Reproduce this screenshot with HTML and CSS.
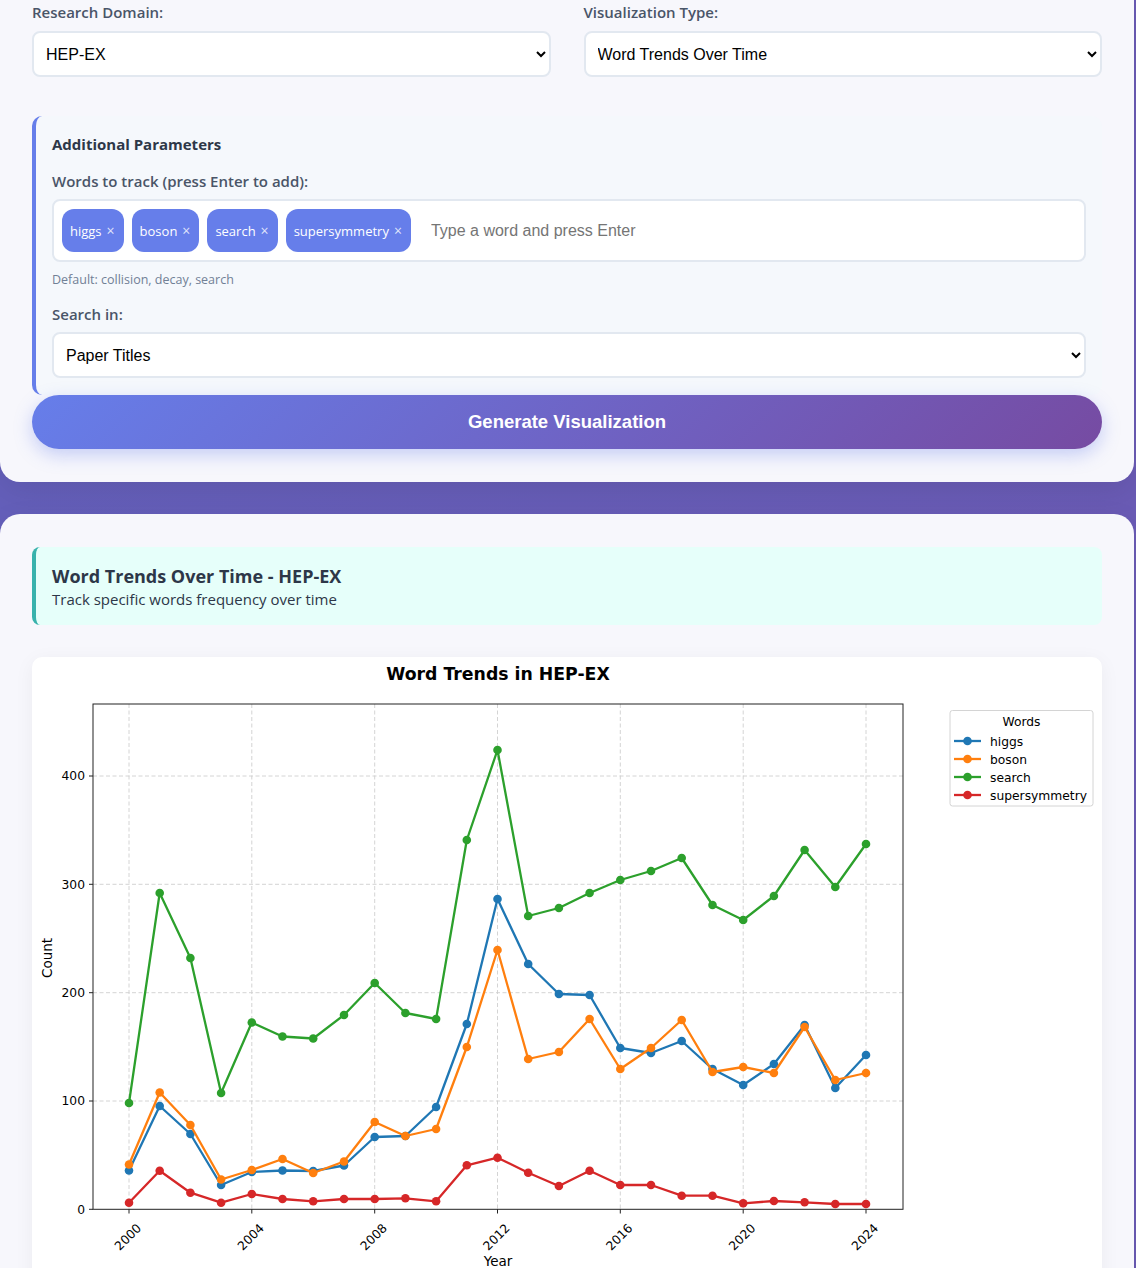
FILE: index.html
```html
<!DOCTYPE html>
<html lang="en">
<head>
<meta charset="utf-8">
<title>Research Visualization</title>
<link rel="stylesheet" href="styles.css">
</head>
<body>
<div class="page">
  <section class="card card-top">
    <div class="form-grid">
      <div class="form-group">
        <label class="label">Research Domain:</label>
        <select class="select"><option>HEP-EX</option></select>
      </div>
      <div class="form-group">
        <label class="label">Visualization Type:</label>
        <select class="select"><option>Word Trends Over Time</option></select>
      </div>
    </div>

    <div class="params">
      <h3 class="params-title">Additional Parameters</h3>
      <label class="label">Words to track (press Enter to add):</label>
      <div class="tag-box">
        <span class="tag">higgs<span class="tag-x">×</span></span>
        <span class="tag">boson<span class="tag-x">×</span></span>
        <span class="tag">search<span class="tag-x">×</span></span>
        <span class="tag">supersymmetry<span class="tag-x">×</span></span>
        <input class="tag-input" type="text" placeholder="Type a word and press Enter">
      </div>
      <div class="hint">Default: collision, decay, search</div>
      <label class="label label-search">Search in:</label>
      <select class="select"><option>Paper Titles</option></select>
    </div>

    <button class="generate">Generate Visualization</button>
  </section>

  <section class="card card-result">
    <div class="result-head">
      <h2 class="result-title">Word Trends Over Time - HEP-EX</h2>
      <p class="result-sub">Track specific words frequency over time</p>
    </div>

    <div class="chart">
      <svg class="chart-svg" width="1070" height="640" viewBox="0 0 1070 640" xmlns="http://www.w3.org/2000/svg">
        <defs>
          <marker id="mb" markerWidth="10" markerHeight="10" refX="5" refY="5" markerUnits="userSpaceOnUse"><circle cx="5" cy="5" r="4.3" fill="#1f77b4"/></marker>
          <marker id="mo" markerWidth="10" markerHeight="10" refX="5" refY="5" markerUnits="userSpaceOnUse"><circle cx="5" cy="5" r="4.3" fill="#ff7f0e"/></marker>
          <marker id="mg" markerWidth="10" markerHeight="10" refX="5" refY="5" markerUnits="userSpaceOnUse"><circle cx="5" cy="5" r="4.3" fill="#2ca02c"/></marker>
          <marker id="mr" markerWidth="10" markerHeight="10" refX="5" refY="5" markerUnits="userSpaceOnUse"><circle cx="5" cy="5" r="4.3" fill="#d62728"/></marker>
        </defs>
        <g transform="translate(-32 -657)">
          <text class="c-title" x="498" y="679.5" text-anchor="middle">Word Trends in HEP-EX</text>

          <g class="grid" stroke="#cfcfcf" stroke-width="0.9" stroke-dasharray="4 2.5" fill="none">
            <line x1="129" y1="704" x2="129" y2="1209.3"/>
            <line x1="251.8" y1="704" x2="251.8" y2="1209.3"/>
            <line x1="374.7" y1="704" x2="374.7" y2="1209.3"/>
            <line x1="497.5" y1="704" x2="497.5" y2="1209.3"/>
            <line x1="620.3" y1="704" x2="620.3" y2="1209.3"/>
            <line x1="743.2" y1="704" x2="743.2" y2="1209.3"/>
            <line x1="866" y1="704" x2="866" y2="1209.3"/>
            <line x1="93" y1="1101" x2="903" y2="1101"/>
            <line x1="93" y1="992.7" x2="903" y2="992.7"/>
            <line x1="93" y1="884.3" x2="903" y2="884.3"/>
            <line x1="93" y1="776" x2="903" y2="776"/>
          </g>

          <g fill="none" stroke-width="2.3" stroke-linejoin="round" stroke-linecap="round">
            <polyline stroke="#1f77b4" marker-start="url(#mb)" marker-mid="url(#mb)" marker-end="url(#mb)"
              points="129,1170.5 159.7,1106 190.4,1134 221.1,1185 251.8,1172 282.5,1170.5 313.2,1171 344,1165.5 374.7,1137 405.4,1136 436.1,1107 466.8,1024 497.5,899 528.2,964 558.9,994 589.6,995 620.3,1048 651,1053 681.7,1041 712.5,1069 743.2,1085 773.9,1064 804.6,1025 835.3,1088 866,1055"/>
            <polyline stroke="#ff7f0e" marker-start="url(#mo)" marker-mid="url(#mo)" marker-end="url(#mo)"
              points="129,1164.5 159.7,1092.5 190.4,1125 221.1,1179.5 251.8,1170 282.5,1159 313.2,1173 344,1161.5 374.7,1122 405.4,1136 436.1,1129 466.8,1047 497.5,950 528.2,1059 558.9,1052 589.6,1019 620.3,1069 651,1048 681.7,1020 712.5,1072 743.2,1067 773.9,1073 804.6,1027 835.3,1080 866,1073"/>
            <polyline stroke="#2ca02c" marker-start="url(#mg)" marker-mid="url(#mg)" marker-end="url(#mg)"
              points="129,1103 159.7,893 190.4,958 221.1,1093 251.8,1022.5 282.5,1036.5 313.2,1038.5 344,1015 374.7,983 405.4,1013 436.1,1019 466.8,840 497.5,750 528.2,916 558.9,908 589.6,893 620.3,880 651,871 681.7,858 712.5,905 743.2,920 773.9,896 804.6,850 835.3,887 866,844"/>
            <polyline stroke="#d62728" marker-start="url(#mr)" marker-mid="url(#mr)" marker-end="url(#mr)"
              points="129,1202.7 159.7,1170.7 190.4,1192.7 221.1,1202.7 251.8,1194 282.5,1199 313.2,1201.3 344,1199 374.7,1199 405.4,1198.3 436.1,1201.3 466.8,1165.3 497.5,1157.7 528.2,1172.7 558.9,1186 589.6,1170.7 620.3,1185 651,1185 681.7,1195.7 712.5,1195.7 743.2,1203.3 773.9,1201 804.6,1202.3 835.3,1204 866,1204"/>
          </g>

          <rect x="93" y="704" width="810" height="505.3" fill="none" stroke="#222" stroke-width="1"/>

          <g stroke="#222" stroke-width="1">
            <line x1="89" y1="1209.3" x2="93" y2="1209.3"/>
            <line x1="89" y1="1101" x2="93" y2="1101"/>
            <line x1="89" y1="992.7" x2="93" y2="992.7"/>
            <line x1="89" y1="884.3" x2="93" y2="884.3"/>
            <line x1="89" y1="776" x2="93" y2="776"/>
            <line x1="129" y1="1209.3" x2="129" y2="1213.5"/>
            <line x1="251.8" y1="1209.3" x2="251.8" y2="1213.5"/>
            <line x1="374.7" y1="1209.3" x2="374.7" y2="1213.5"/>
            <line x1="497.5" y1="1209.3" x2="497.5" y2="1213.5"/>
            <line x1="620.3" y1="1209.3" x2="620.3" y2="1213.5"/>
            <line x1="743.2" y1="1209.3" x2="743.2" y2="1213.5"/>
            <line x1="866" y1="1209.3" x2="866" y2="1213.5"/>
          </g>

          <g class="c-tick" text-anchor="end">
            <text x="85" y="1213.7">0</text>
            <text x="85" y="1105.4">100</text>
            <text x="85" y="997.1">200</text>
            <text x="85" y="888.7">300</text>
            <text x="85" y="780.4">400</text>
          </g>
          <g class="c-tick" text-anchor="end">
            <text x="142" y="1229" transform="rotate(-45 142 1229)">2000</text>
            <text x="264.8" y="1229" transform="rotate(-45 264.8 1229)">2004</text>
            <text x="387.7" y="1229" transform="rotate(-45 387.7 1229)">2008</text>
            <text x="510.5" y="1229" transform="rotate(-45 510.5 1229)">2012</text>
            <text x="633.3" y="1229" transform="rotate(-45 633.3 1229)">2016</text>
            <text x="756.2" y="1229" transform="rotate(-45 756.2 1229)">2020</text>
            <text x="879" y="1229" transform="rotate(-45 879 1229)">2024</text>
          </g>
          <text class="c-axis" x="498" y="1266" text-anchor="middle">Year</text>
          <text class="c-axis" x="52" y="958" text-anchor="middle" transform="rotate(-90 52 958)">Count</text>

          <g class="legend">
            <rect x="950" y="710.5" width="143" height="95.5" rx="2.5" fill="#fff" stroke="#d4d4d4" stroke-width="1"/>
            <text class="c-tick" x="1021.5" y="725.5" text-anchor="middle">Words</text>
            <line x1="954" y1="741" x2="981" y2="741" stroke="#1f77b4" stroke-width="2.3"/>
            <circle cx="967.5" cy="741" r="4.3" fill="#1f77b4"/>
            <text class="c-tick" x="990" y="745.5">higgs</text>
            <line x1="954" y1="759" x2="981" y2="759" stroke="#ff7f0e" stroke-width="2.3"/>
            <circle cx="967.5" cy="759" r="4.3" fill="#ff7f0e"/>
            <text class="c-tick" x="990" y="763.5">boson</text>
            <line x1="954" y1="777" x2="981" y2="777" stroke="#2ca02c" stroke-width="2.3"/>
            <circle cx="967.5" cy="777" r="4.3" fill="#2ca02c"/>
            <text class="c-tick" x="990" y="781.5">search</text>
            <line x1="954" y1="795" x2="981" y2="795" stroke="#d62728" stroke-width="2.3"/>
            <circle cx="967.5" cy="795" r="4.3" fill="#d62728"/>
            <text class="c-tick" x="990" y="799.5">supersymmetry</text>
          </g>
        </g>
      </svg>
    </div>
  </section>
</div>
</body>
</html>
```

FILE: styles.css
```css
* { box-sizing: border-box; }

html, body { margin: 0; padding: 0; }

body {
  font-family: "Open Sans", "Noto Sans", sans-serif;
  background: linear-gradient(90deg, #645fba 0%, #6a5bb5 100%);
  min-height: 100vh;
  overflow: hidden;
}

.page {
  width: 1134px;
  display: flex;
  flex-direction: column;
  gap: 32px;
}

.card {
  background: #f7f7fc;
  border-radius: 20px;
  padding: 32px;
  box-shadow: 0 10px 30px rgba(0, 0, 0, 0.08);
}

.card-top {
  margin-top: -20px;
  padding-top: 22px;
  padding-bottom: 33px;
}

.form-grid {
  display: grid;
  grid-template-columns: 1fr 1fr;
  gap: 33px;
  margin-bottom: 39px;
}

.form-group {
  display: flex;
  flex-direction: column;
}

.label {
  display: block;
  font-size: 15px;
  line-height: 20px;
  font-weight: 600;
  color: #4a5568;
  margin-bottom: 9px;
}

.select {
  display: block;
  width: 100%;
  height: 46px;
  padding: 0 8px 0 8px;
  font-family: "Liberation Sans", Arial, sans-serif;
  font-size: 16px;
  color: #000;
  background: #fff;
  border: 2px solid #e2e8f0;
  border-radius: 8px;
}

.params {
  background: #f5f8fc;
  border-left: 4px solid #667eea;
  border-radius: 10px;
  padding: 18px 16px 17px 16px;
}

.params-title {
  margin: 0 0 17px 0;
  font-size: 15px;
  line-height: 20px;
  font-weight: 700;
  color: #2d3748;
}

.params .label { margin-bottom: 8px; }

.tag-box {
  display: flex;
  align-items: center;
  gap: 8px;
  background: #fff;
  border: 2px solid #e2e8f0;
  border-radius: 8px;
  padding: 8px;
  min-height: 62px;
}

.tag {
  display: inline-flex;
  align-items: center;
  height: 43px;
  padding: 0 9px 0 8px;
  background: #667eea;
  color: #fff;
  border-radius: 12px;
  font-size: 13px;
  line-height: 18px;
}

.tag-x {
  margin-left: 5px;
  font-size: 14px;
  color: rgba(255, 255, 255, 0.8);
}

.tag-input {
  flex: 1;
  border: none;
  outline: none;
  height: 40px;
  padding: 0 12px;
  font-family: "Liberation Sans", Arial, sans-serif;
  font-size: 16px;
  background: transparent;
}

.tag-input::placeholder { color: #757575; }

.hint {
  margin-top: 9px;
  font-size: 12.5px;
  line-height: 17px;
  color: #718096;
}

.label-search { margin-top: 16px; }

.generate {
  display: block;
  width: 100%;
  height: 54px;
  border: none;
  border-radius: 27px;
  background: linear-gradient(135deg, #667eea 0%, #764ba2 100%);
  color: #fff;
  font-family: "Liberation Sans", Arial, sans-serif;
  font-size: 18.5px;
  font-weight: 700;
  box-shadow: 0 6px 18px rgba(102, 126, 234, 0.35);
}

.card-result {
  padding-top: 33px;
  display: flex;
  flex-direction: column;
  gap: 32px;
}

.result-head {
  background: #e6fffa;
  border-left: 4px solid #38b2ac;
  border-radius: 8px;
  padding: 17px 16px 16px 16px;
}

.result-title {
  margin: 0;
  font-size: 18px;
  line-height: 24px;
  font-weight: 700;
  color: #2d3748;
}

.result-sub {
  margin: 1px 0 0 0;
  font-size: 15px;
  line-height: 20px;
  color: #2d3748;
}

.chart {
  background: #fff;
  border-radius: 10px;
  box-shadow: 0 4px 20px rgba(0, 0, 0, 0.05);
}

.chart-svg { display: block; }

.c-title {
  font-family: "DejaVu Sans", sans-serif;
  font-size: 17.3px;
  font-weight: 700;
  fill: #000;
}

.c-tick {
  font-family: "DejaVu Sans", sans-serif;
  font-size: 12.3px;
  fill: #000;
}

.c-axis {
  font-family: "DejaVu Sans", sans-serif;
  font-size: 13.5px;
  fill: #000;
}
```
